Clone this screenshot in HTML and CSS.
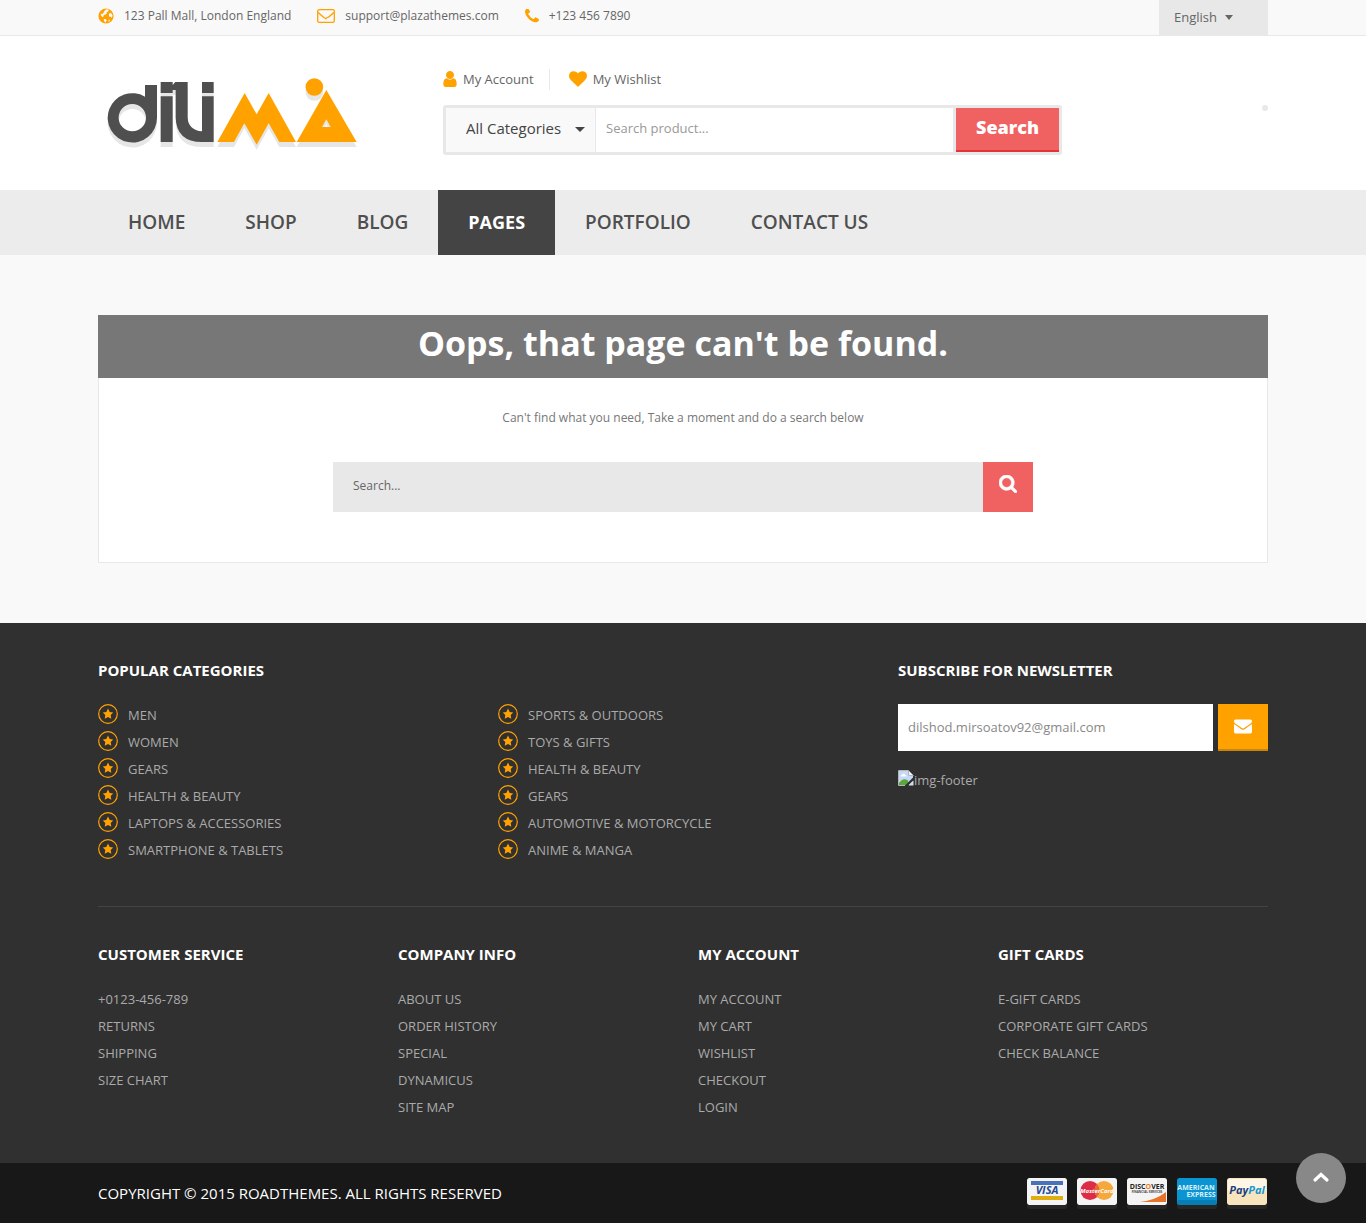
FILE: index.html
```html
<!DOCTYPE html>
<html lang="en">
<head>
<meta charset="utf-8">
<meta name="viewport" content="width=device-width, initial-scale=1">
<title>Page not found - Dilima</title>
<link rel="stylesheet" href="styles.css">
</head>
<body>
<svg class="sprite" aria-hidden="true">
  <symbol id="i-globe" viewBox="0 0 16 16"><circle cx="8" cy="8" r="7.6" fill="#ffa200"/><path fill="#f9f9f9" d="M6.600 2.800 8.400 1.200 10.800 1.600 10.200 3.400 8.600 4.200 8.900 5.600 7.300 6.800 5.700 6.900 5.500 8.600 4.600 9.300 3 7.400 2.900 5.800 4.600 5.900 5.600 4.400ZM11 5.700 12.800 4.800 14.600 7.400 13.800 9.700 12.600 8.700 10.900 8.400ZM5.800 11 7.600 10.900 8.800 12.200 7.700 14.400 6.300 13.400ZM10.500 12.200 12 11.600 11.700 13.200 10.500 13.800Z"/></symbol>
  <symbol id="i-mail" viewBox="0 0 18 16"><g fill="none" stroke="#ffa200" stroke-width="1.3"><rect x=".7" y="1.700" width="16.600" height="12.600" rx="1.400"/><path d="M1.200 4.500 Q4 7.200 6.600 9.200 T9 10.600 T11.400 9.200 Q14 7.200 16.800 4.500"/></g></symbol>
  <symbol id="i-phone" viewBox="192 192 1408 1408"><path fill="#ffa200" d="M1600 1240q0 27-10 70.5t-21 68.5q-21 50-122 106-94 51-186 51-27 0-52.5-3.5t-57.5-12.5-47.5-14.5-55.5-20.5-49-18q-98-35-175-83-128-79-264.5-215.5t-215.5-264.5q-48-77-83-175-3-9-18-49t-20.5-55.5-14.5-47.5-12.500-57.500-3.500-52.500q0-92 51-186 56-101 106-122 25-11 68.500-21t70.500-10q14 0 21 3 18 6 53 76 11 19 30 54t35 63.500 31 53.500q3 4 17.500 25t21.500 35.500 7 28.500q0 20-28.500 50t-62 55-62 53-28.500 46q0 9 5 22.500t8.500 20.500 14 24 11.500 19q76 137 174 235t235 174q2 1 19 11.500t24 14 20.500 8.500 22.500 5q18 0 46-28.500t53-62 55-62 50-28.500q14 0 28.500 7t35.500 21.500 25 17.500q25 15 53.500 31t63.500 35 54 30q70 35 76 53 3 7 3 21z"/></symbol>
  <symbol id="i-user" viewBox="256 128 1280 1536"><path fill="#ffa200" d="M1536 1399q0 109-62.500 187t-150.500 78h-854q-88 0-150.500-78t-62.500-187q0-85 8.500-160.500t31.500-152 58.500-131 94-89 134.500-34.500q131 128 313 128t313-128q76 0 134.500 34.500t94 89 58.500 131 31.500 152 8.500 160.500zm-256-887q0 159-112.500 271.500t-271.500 112.500-271.500-112.500-112.500-271.500 112.500-271.500 271.500-112.500 271.500 112.500 112.500 271.500z"/></symbol>
  <symbol id="i-heart" viewBox="0 128 1792 1536"><path fill="#ffa200" d="M896 1664q-26 0-44-18l-624-602q-10-8-27.500-26t-55.500-65.500-68-97.500-53.500-121-23.500-138q0-220 127-344t351-124q62 0 126.500 21.500t120 58 95.500 68.500 76 68q36-36 76-68t95.500-68.500 120-58 126.500-21.500q224 0 351 124t127 344q0 221-229 450l-623 600q-18 18-44 18z"/></symbol>
  <symbol id="i-search" viewBox="64 128 1664 1664"><path fill="#fff" stroke="#fff" stroke-width="60" d="M1216 832q0-185-131.500-316.500t-316.500-131.500-316.500 131.500-131.500 316.500 131.500 316.500 316.500 131.500 316.500-131.500 131.500-316.500zm512 832q0 52-38 90t-90 38q-54 0-90-38l-343-342q-179 124-399 124-143 0-273.500-55.500t-225-150-150-225-55.500-273.500 55.500-273.500 150-225 225-150 273.500-55.500 273.500 55.500 225 150 150 225 55.500 273.500q0 220-124 399l343 343q37 37 37 90z"/></symbol>
  <symbol id="i-envelope" viewBox="0 256 1792 1408"><path fill="#fff" d="M1792 710v794q0 66-47 113t-113 47h-1472q-66 0-113-47t-47-113v-794q44 49 101 87 362 246 497 345 57 42 92.500 65.500t94.500 48 110 24.500h2q51 0 110-24.500t94.500-48 92.500-65.500q170-123 498-345 57-39 100-87zm0-294q0 79-49 151t-122 123q-376 261-468 325-10 7-42.500 31t-54 38.500-52 32.500-57.500 27-50 9h-2q-23 0-50-9t-57.500-27-52-32.500-54-38.500-42.500-31q-91-64-262-182.500t-205-142.500q-62-42-117-115.500t-55-136.500q0-78 41.500-130t118.500-52h1472q65 0 112.500 47t47.500 113z"/></symbol>
  <symbol id="i-star" viewBox="0 0 20 20"><circle cx="10" cy="10" r="9.300" fill="none" stroke="#ffa200" stroke-width="1.200"/><path fill="#ffa200" d="M10 4.500 11.700 7.900 15.200 8.400 12.700 10.900 13.300 14.700 10 13 6.700 14.700 7.300 10.900 4.800 8.400 8.300 7.900Z"/></symbol>
  <symbol id="logo-shape" viewBox="45 225 765 225">
    <path fill-rule="evenodd" d="M165 255H201V353A74 74 0 1 1 165 290ZM127 312A41 41 0 1 0 127 394A41 41 0 1 0 127 312Z"/>
    <path d="M212 289H248V426H212ZM212 246H248V255L256 246H293V353Q295 390 336 394V289H371V426H336Q259 425 257 353V270H248V279H212ZM336 246H371V279H336Z"/>
  </symbol>
  <symbol id="logo-peaks" viewBox="45 225 765 225">
    <path fill-rule="evenodd" d="M382 426 464 279 500 343 536 279 618 426H568L536 370 500 434 463 370 432 426ZM620 426 709 270 800 426ZM709 358 696 381H722Z"/>
    <circle cx="673" cy="261" r="26.500"/>
  </symbol>
</svg>

<div class="topbar">
  <div class="container topbar-row">
    <ul class="contacts">
      <li><svg class="ic ic-16"><use href="#i-globe"/></svg>123 Pall Mall, London England</li>
      <li><svg class="ic ic-mail"><use href="#i-mail"/></svg>support@plazathemes.com</li>
      <li><svg class="ic ic-14"><use href="#i-phone"/></svg>+123 456 7890</li>
    </ul>
    <div class="pick pick-lang">
      <select aria-label="Language"><option>English</option><option>French</option></select>
    </div>
  </div>
</div>

<header class="header">
  <div class="container header-row">
    <a class="logo" href="#" aria-label="Dilima home">
      <svg width="255" height="80" viewBox="0 0 255 80">
        <g fill="#e6e6e6"><use href="#logo-shape" y="5" width="255" height="75"/><use href="#logo-peaks" y="5" width="255" height="75"/></g>
        <use href="#logo-shape" fill="#4f4f4f" width="255" height="75"/>
        <use href="#logo-peaks" fill="#ffa200" width="255" height="75"/>
      </svg>
    </a>
    <div class="tools">
      <ul class="account">
        <li><a href="#"><svg class="ic ic-user"><use href="#i-user"/></svg>My Account</a></li>
        <li><a href="#"><svg class="ic ic-mail"><use href="#i-heart"/></svg>My Wishlist</a></li>
      </ul>
      <form class="product-search">
        <div class="pick pick-cat">
          <select aria-label="Category"><option>All Categories</option></select>
        </div>
        <input type="text" aria-label="Search product" placeholder="Search product...">
        <button type="button">Search</button>
      </form>
    </div>
    <span class="cart-dot"></span>
  </div>
</header>

<nav class="nav">
  <ul class="container nav-row">
    <li><a href="#">HOME</a></li>
    <li><a href="#">SHOP</a></li>
    <li><a href="#">BLOG</a></li>
    <li><a href="#" class="active">PAGES</a></li>
    <li><a href="#">PORTFOLIO</a></li>
    <li><a href="#">CONTACT US</a></li>
  </ul>
</nav>

<main class="container main">
  <h1>Oops, that page can't be found.</h1>
  <div class="panel">
    <p>Can't find what you need, Take a moment and do a search below</p>
    <form class="site-search">
      <input type="text" aria-label="Search the site" placeholder="Search...">
      <button type="button" aria-label="Search"><svg class="ic ic-search"><use href="#i-search"/></svg></button>
    </form>
  </div>
</main>

<footer class="footer">
  <div class="container">
    <div class="footer-top">
      <section class="popular">
        <h2>POPULAR CATEGORIES</h2>
        <div class="popular-lists">
          <ul class="links starred">
            <li><svg class="ic ic-star"><use href="#i-star"/></svg><a href="#">MEN</a></li>
            <li><svg class="ic ic-star"><use href="#i-star"/></svg><a href="#">WOMEN</a></li>
            <li><svg class="ic ic-star"><use href="#i-star"/></svg><a href="#">GEARS</a></li>
            <li><svg class="ic ic-star"><use href="#i-star"/></svg><a href="#">HEALTH &amp; BEAUTY</a></li>
            <li><svg class="ic ic-star"><use href="#i-star"/></svg><a href="#">LAPTOPS &amp; ACCESSORIES</a></li>
            <li><svg class="ic ic-star"><use href="#i-star"/></svg><a href="#">SMARTPHONE &amp; TABLETS</a></li>
          </ul>
          <ul class="links starred">
            <li><svg class="ic ic-star"><use href="#i-star"/></svg><a href="#">SPORTS &amp; OUTDOORS</a></li>
            <li><svg class="ic ic-star"><use href="#i-star"/></svg><a href="#">TOYS &amp; GIFTS</a></li>
            <li><svg class="ic ic-star"><use href="#i-star"/></svg><a href="#">HEALTH &amp; BEAUTY</a></li>
            <li><svg class="ic ic-star"><use href="#i-star"/></svg><a href="#">GEARS</a></li>
            <li><svg class="ic ic-star"><use href="#i-star"/></svg><a href="#">AUTOMOTIVE &amp; MOTORCYCLE</a></li>
            <li><svg class="ic ic-star"><use href="#i-star"/></svg><a href="#">ANIME &amp; MANGA</a></li>
          </ul>
        </div>
      </section>
      <section class="newsletter">
        <h2>SUBSCRIBE FOR NEWSLETTER</h2>
        <form class="subscribe">
          <input type="email" aria-label="Email address" value="dilshod.mirsoatov92@gmail.com">
          <button type="button" aria-label="Subscribe"><svg class="ic ic-envelope"><use href="#i-envelope"/></svg></button>
        </form>
        <div class="missing">
          <svg width="16" height="16" viewBox="0 0 16 16"><path fill="#c3d9f7" d="M1 1H10.500L15 5.500V15H1Z"/><path fill="#fff" d="M2.500 6.500Q2.500 4.500 4.500 4.500Q6 2.500 7.500 5Q9 5 8.500 6.500Z"/><path fill="#5aa83c" d="M1 15V13Q5 7 10 10.500L11 15Z"/><path fill="#303030" d="M16 6.500 6.500 16H9.500L16 10Z"/><path fill="#d5dbe5" d="M15.500 10.500 10.500 15.500H15.500Z"/><path fill="#eef3fb" stroke="#aaa" stroke-width=".8" d="M10.500 .5V5.500H15.500Z"/><path fill="none" stroke="#b5b5b5" d="M10.500 .5H.5V15.500H7"/></svg><span>img-footer</span>
        </div>
      </section>
    </div>
    <div class="footer-cols">
      <section>
        <h2>CUSTOMER SERVICE</h2>
        <ul class="links"><li><a href="#">+0123-456-789</a></li><li><a href="#">RETURNS</a></li><li><a href="#">SHIPPING</a></li><li><a href="#">SIZE CHART</a></li></ul>
      </section>
      <section>
        <h2>COMPANY INFO</h2>
        <ul class="links"><li><a href="#">ABOUT US</a></li><li><a href="#">ORDER HISTORY</a></li><li><a href="#">SPECIAL</a></li><li><a href="#">DYNAMICUS</a></li><li><a href="#">SITE MAP</a></li></ul>
      </section>
      <section>
        <h2>MY ACCOUNT</h2>
        <ul class="links"><li><a href="#">MY ACCOUNT</a></li><li><a href="#">MY CART</a></li><li><a href="#">WISHLIST</a></li><li><a href="#">CHECKOUT</a></li><li><a href="#">LOGIN</a></li></ul>
      </section>
      <section>
        <h2>GIFT CARDS</h2>
        <ul class="links"><li><a href="#">E-GIFT CARDS</a></li><li><a href="#">CORPORATE GIFT CARDS</a></li><li><a href="#">CHECK BALANCE</a></li></ul>
      </section>
    </div>
  </div>
</footer>

<div class="bottom">
  <div class="container bottom-row">
    <span>COPYRIGHT © 2015 ROADTHEMES. ALL RIGHTS RESERVED</span>
    <div class="cards">
      <svg class="card" viewBox="0 0 40 27" role="img" aria-label="Visa"><rect width="40" height="27" rx="2" fill="#f4f4f4"/><path fill="#4a72b8" d="M4 3H36V7H4Z"/><path fill="#dfae12" d="M4 18H36V22H4Z"/><text x="20" y="16" class="t-visa">VISA</text></svg>
      <svg class="card" viewBox="0 0 40 27" role="img" aria-label="MasterCard"><rect width="40" height="27" rx="2" fill="#f4f4f4"/><circle cx="13" cy="12.500" r="9.500" fill="#dc2c46"/><circle cx="27" cy="12.500" r="9.500" fill="#f5a83c"/><path fill="#e8673c" d="M20 6.100A9.500 9.500 0 0 1 20 18.900A9.500 9.500 0 0 1 20 6.100Z"/><text x="20" y="15" class="t-master">MasterCard</text></svg>
      <svg class="card" viewBox="0 0 40 27" role="img" aria-label="Discover"><rect width="40" height="27" rx="2" fill="#f4f4f4"/><path fill="#e8732a" d="M13 24Q29 22 39 14V24Z"/><text x="20" y="11" class="t-disc">DISC<tspan fill="#ee7a2a">O</tspan>VER</text><text x="20" y="15" class="t-fin">FINANCIAL SERVICES</text></svg>
      <svg class="card" viewBox="0 0 40 27" role="img" aria-label="American Express"><rect width="40" height="27" rx="2" fill="#0b94d2"/><rect y="22" width="40" height="5" rx="2" fill="#067db5"/><text x="19" y="12" class="t-amex">AMERICAN</text><text x="24" y="19" class="t-amex">EXPRESS</text></svg>
      <svg class="card" viewBox="0 0 40 27" role="img" aria-label="PayPal"><rect width="40" height="27" rx="2" fill="#f8e4bd"/><rect x="1" y="1" width="38" height="12" rx="1" fill="#fdf6e6"/><text x="20" y="16" class="t-pay">Pay<tspan fill="#1795d0">Pal</tspan></text></svg>
    </div>
  </div>
</div>
<button class="to-top" type="button" aria-label="Back to top"><svg width="18" height="12" viewBox="0 0 18 12"><path d="M3 9 9 3.500 15 9" fill="none" stroke="#fff" stroke-width="3.200" stroke-linecap="round"/></svg></button>
</body>
</html>
```
FILE: styles.css
```css
* { box-sizing: border-box; }
body {
  margin: 0;
  background: #f9f9f9;
  color: #666;
  font: 13px/20px "Open Sans", "Noto Sans", sans-serif;
}
ul { list-style: none; margin: 0; padding: 0; }
a { color: inherit; text-decoration: none; }
h1, h2, p { margin: 0; }
input, select, button { font: inherit; color: inherit; border: 0; margin: 0; border-radius: 0; }
button { cursor: pointer; padding: 0; }
input::placeholder { color: inherit; opacity: 1; }
.sprite { display: none; }
.container { width: 100%; max-width: 1170px; margin: 0 auto; }

.ic { display: block; flex: none; }
.ic-14 { width: 14px; height: 14px; }
.ic-16 { width: 16px; height: 16px; }
.ic-user { width: 14px; height: 16px; }
.ic-mail { width: 18px; height: 16px; }
.ic-search { width: 18px; height: 18px; }
.ic-envelope { width: 18px; height: 15px; }
.ic-star { width: 20px; height: 20px; }

.topbar { border-bottom: 1px solid #e8e8e8; }
.topbar-row { display: flex; justify-content: space-between; align-items: flex-start; }
.contacts { display: flex; gap: 26px; font-size: 12px; padding-top: 6px; }
.contacts li { display: flex; align-items: center; gap: 10px; }

.pick { position: relative; }
.pick select { appearance: none; width: 100%; height: 100%; background: transparent; }
.pick::after {
  content: "";
  position: absolute;
  top: 50%;
  border: 5px solid transparent;
  border-top-color: currentColor;
  border-bottom: 0;
  pointer-events: none;
}
.pick-lang { width: 109px; height: 35px; background: #e8e8e8; }
.pick-lang select { padding: 0 15px 2px; }
.pick-lang::after { right: 35px; margin-top: -3px; border-width: 5px 4px 0; }

.header { background: #fff; }
.header-row { display: flex; padding: 33px 0 35px; }
.logo { width: 345px; padding: 6px 0 0 7px; }
.logo svg { display: block; }
.tools { width: 619px; }
.account { display: flex; padding-bottom: 15px; }
.account li { display: flex; height: 21px; }
.account li + li { border-left: 1px solid #e8e8e8; margin-left: 15px; padding-left: 19px; }
.account a { display: flex; align-items: center; gap: 6px; height: 20px; }
.product-search {
  display: flex;
  height: 50px;
  border: 3px solid #e8e8e8;
  border-radius: 3px;
}
.pick-cat { width: 150px; background: #f9f9f9; border-right: 1px solid #e8e8e8; color: #444; font-size: 15px; }
.pick-cat select { padding: 0 20px 5px; }
.pick-cat::after { right: 10px; margin-top: -3px; }
.product-search input { flex: 1; min-width: 0; padding: 0 10px 4px; color: #999; background: #fff; }
.product-search button {
  width: 106px;
  background: #f06262;
  background-clip: padding-box;
  border-left: 3px solid #e8e8e8;
  box-shadow: inset 0 -2px #e23434;
  color: #fff;
  font-size: 18px;
  font-weight: 800;
  padding-bottom: 6px;
}
.cart-dot { width: 6px; height: 6px; margin: 36px 0 0 auto; border-radius: 3px; background: #e8e8e8; }

.nav { background: #ececec; }
.nav-row { display: flex; }
.nav a { display: block; padding: 0 30px; font-size: 19px; line-height: 65px; font-weight: 600; color: #4f4f4f; }
.nav .active { background: #444; color: #fff; font-size: 18px; font-weight: 700; }

.main { padding: 60px 0; text-align: center; }
.main h1 { background: #777; color: #fff; font-size: 34px; line-height: 57px; padding-bottom: 6px; font-weight: 700; }
.panel { background: #fff; border: 1px solid #e8e8e8; border-top: 0; padding: 30px 20px 50px; }
.panel p { font-size: 12px; color: #777; padding-bottom: 34px; }
.site-search { display: flex; max-width: 700px; margin: 0 auto; }
.site-search input { flex: 1; min-width: 0; height: 50px; padding: 0 20px 3px; background: #e8e8e8; font-size: 12px; }
.site-search button { width: 50px; background: #f06262; padding: 0 0 6px 16px; }

.footer { background: #303030; color: #aaa; padding: 37px 0 42px; }
.footer h2 { color: #fff; font-size: 15px; line-height: 20px; font-weight: 700; padding-bottom: 22px; }
.footer-top { display: flex; gap: 30px; border-bottom: 1px solid #444; padding-bottom: 42px; margin-bottom: 37px; }
.popular { flex: 1; }
.popular-lists { display: grid; grid-template-columns: 1fr 1fr; gap: 30px; }
.links { line-height: 27px; }
.starred li { display: flex; gap: 10px; }
.starred .ic { margin-top: 2px; }
.newsletter { width: 370px; }
.subscribe { display: flex; gap: 5px; height: 49px; padding-top: 2px; }
.subscribe input { flex: 1; min-width: 0; padding: 0 10px 2px; background: #fff; color: #888; }
.subscribe button { width: 50px; background: #ffa200; box-shadow: inset 0 -2px #c98514; padding: 0 0 3px 16px; }
.missing { display: flex; padding-top: 19px; }
.footer-cols { display: grid; grid-template-columns: repeat(4, 1fr); gap: 30px; }

.bottom { background: #181818; color: #fff; font-size: 15px; }
.bottom-row { display: flex; justify-content: space-between; align-items: center; height: 60px; }
.cards { display: flex; gap: 10px; padding: 0 1px 4px 0; }
.card { width: 40px; height: 27px; border-radius: 2px; box-shadow: 0 4px #262626; }
.card text { font-family: "Open Sans", sans-serif; font-weight: 700; text-anchor: middle; }
.card .t-visa { font-size: 11px; font-style: italic; fill: #244a94; }
.card .t-master { font-size: 6px; font-style: italic; fill: #fff; }
.card .t-disc { font-size: 7px; fill: #222; }
.card .t-fin { font-size: 3px; fill: #444; }
.card .t-amex { font-size: 7px; fill: #d8f0fb; }
.card .t-pay { font-size: 11px; font-style: italic; fill: #1c3f7c; }

.to-top {
  position: fixed;
  right: 20px;
  bottom: 20px;
  width: 50px;
  height: 50px;
  border-radius: 25px;
  background: #888;
}
```
